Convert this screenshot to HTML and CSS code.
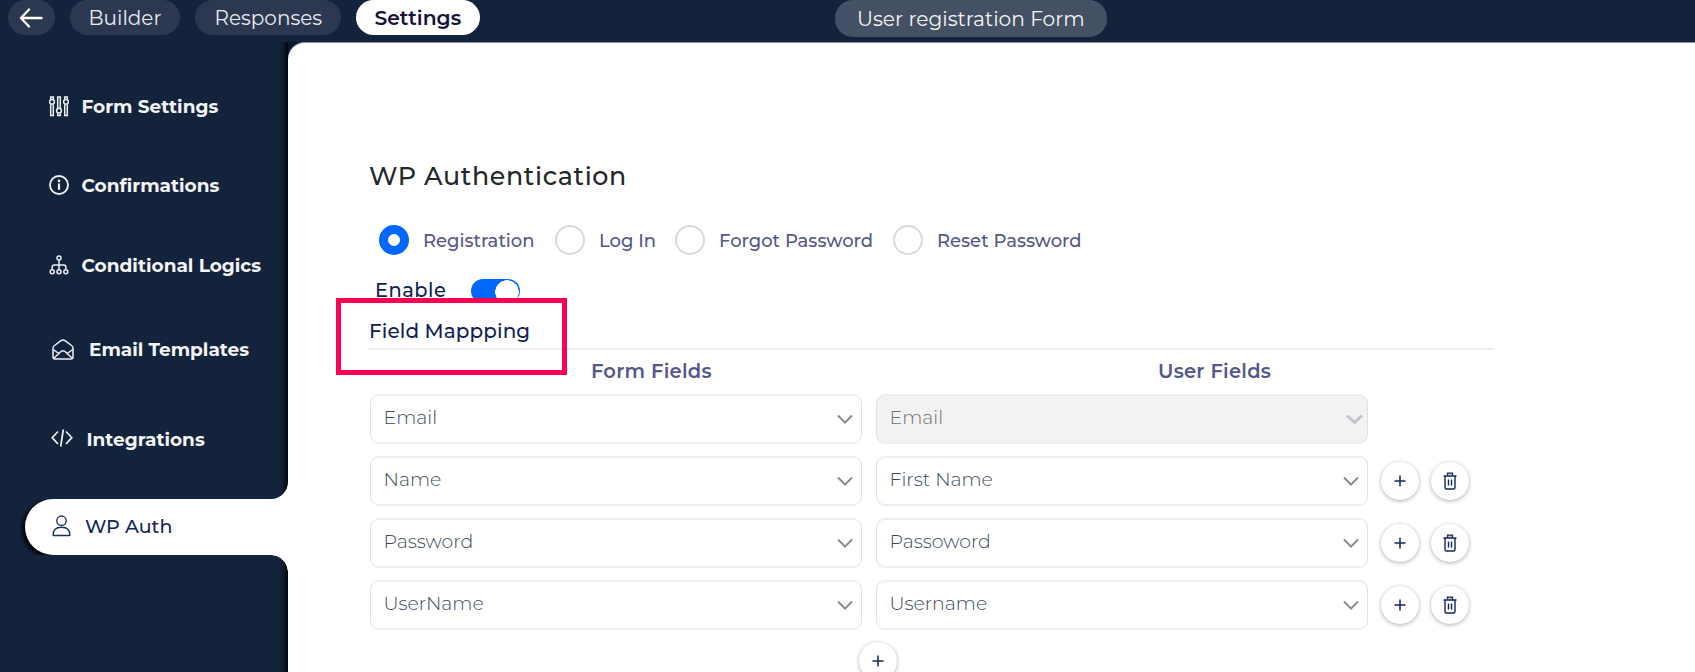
FILE: index.html
```html
<!DOCTYPE html>
<html lang="en">
<head>
<meta charset="utf-8">
<title>User registration Form</title>
<link rel="stylesheet" href="styles.css">
</head>
<body>
<svg class="defs" aria-hidden="true">
  <symbol id="chev" viewBox="0 0 16 11"><path d="M1 1.500 8 8.600l7-7.100" fill="none" stroke="currentColor" stroke-width="2"/></symbol>
  <symbol id="chev-off" viewBox="0 0 17 11"><path d="M1 1.500 8.500 8.600l7.500-7.100" fill="none" stroke="currentColor" stroke-width="2.800"/></symbol>
  <symbol id="plus" viewBox="0 0 12 12"><path d="M6 .5v11M.5 6h11" fill="none" stroke="currentColor" stroke-width="1.500"/></symbol>
  <symbol id="trash" viewBox="0 0 14 18"><path d="M4.500 3.500V1.200h5v2.300" fill="#c9cedb" stroke="currentColor" stroke-width="1.300"/><path d="M.5 4h13M2 4v11.500q0 1.500 1.500 1.500h7q1.500 0 1.500-1.500V4M5.500 7.500v6M8.500 7.500v6" fill="none" stroke="currentColor" stroke-width="1.400"/></symbol>
</svg>

<header class="topbar">
  <nav class="tabs">
    <a class="back"><svg width="24" height="20" viewBox="0 0 24 20"><path d="M10 1.500 2 10l8 8.500M2 10h20.500" fill="none" stroke="#fff" stroke-width="2.400" stroke-linecap="round" stroke-linejoin="round"/></svg></a>
    <a class="tab builder"><span class="t">Builder</span></a>
    <a class="tab responses"><span class="t">Responses</span></a>
    <a class="tab settings"><span class="t">Settings</span></a>
  </nav>
  <div class="title"><span class="t">User registration Form</span></div>
</header>

<div class="main">
  <aside class="sidebar">
    <div class="menu">
      <a class="item i1"><svg width="20" height="21" viewBox="0 0 20 21"><g fill="none" stroke="#eef0f6" stroke-width="1.500"><path d="M1.700 3V1h2.600v2M1.700 8.500V19.500h2.600V8.500M8.700 12V1h2.600v11M8.700 17.500v2h2.600v-2M15.700 3V1h2.600v2M15.700 8.500v11h2.600v-11"/><circle cx="3" cy="5.800" r="2.400"/><circle cx="10" cy="14.700" r="2.400"/><circle cx="17" cy="5.800" r="2.400"/></g></svg><span class="t">Form Settings</span></a>
      <a class="item i2"><svg width="20" height="20" viewBox="0 0 20 20"><circle cx="10" cy="10" r="9" fill="none" stroke="#eef0f6" stroke-width="1.900"/><path d="M10 8.500v6.300" stroke="#eef0f6" stroke-width="2.200"/><circle cx="10" cy="5.900" r="1.300" fill="#eef0f6"/></svg><span class="t">Confirmations</span></a>
      <a class="item i3"><svg width="20" height="20" viewBox="0 0 20 20"><g fill="none" stroke="#eef0f6" stroke-width="1.500"><circle cx="10" cy="3" r="2"/><circle cx="3.200" cy="16.700" r="2"/><circle cx="10" cy="16.700" r="2"/><circle cx="16.800" cy="16.700" r="2"/><path d="M10 5v9.500M3.200 14.500V12q0-2 2-2h9.600q2 0 2 2v2.500"/></g></svg><span class="t">Conditional Logics</span></a>
      <a class="item i4"><svg width="22" height="21" viewBox="0 0 22 21"><g fill="none" stroke="#eef0f6" stroke-width="1.500" stroke-linejoin="round"><path d="M1 9Q1 7.500 2.500 6.500L9 1.700q2-1.300 4 0l6.500 4.800Q21 7.500 21 9v9q0 2-2 2H3q-2 0-2-2z"/><path d="M1.200 10.500 7.500 15M20.800 10.500 14.500 15M2 19l7-6.500q2-1.500 4 0l7 6.500"/></g></svg><span class="t">Email Templates</span></a>
      <a class="item i5"><svg width="22" height="18" viewBox="0 0 22 18"><path d="M7 2.500 1.200 8.700 7 15M15 2.500l5.800 6.200L15 15M12.300.5 9.700 17.500" fill="none" stroke="#eef0f6" stroke-width="1.700"/></svg><span class="t">Integrations</span></a>
    </div>
    <div class="active-row">
      <a class="pill"><svg width="19" height="22" viewBox="0 0 19 22"><g fill="none" stroke="#1c2f66" stroke-width="1.400"><circle cx="9.500" cy="5.700" r="4.700"/><path d="M1.200 20.500q-.4-8.300 8.300-8.300t8.300 8.300z" stroke-linejoin="round"/></g></svg><span class="t">WP Auth</span></a>
    </div>
    <div class="rest"></div>
  </aside>

  <main class="content">
    <h1><span class="t">WP Authentication</span></h1>
    <div class="radios">
      <label class="radio r1"><i class="dot on"></i><span class="t">Registration</span></label>
      <label class="radio r2"><i class="dot"></i><span class="t">Log In</span></label>
      <label class="radio r3"><i class="dot"></i><span class="t">Forgot Password</span></label>
      <label class="radio r4"><i class="dot"></i><span class="t">Reset Password</span></label>
    </div>
    <div class="enable"><span class="t">Enable</span><i class="switch"></i></div>
    <h2><span class="t">Field Mappping</span><i class="highlight"></i></h2>
    <div class="heads"><span class="t h-form">Form Fields</span><span class="t h-user">User Fields</span></div>
    <div class="row">
      <div class="select"><span class="t">Email</span><svg class="chev"><use href="#chev"/></svg></div>
      <div class="select off"><span class="t">Email</span><svg class="chev"><use href="#chev-off"/></svg></div>
    </div>
    <div class="row">
      <div class="select"><span class="t">Name</span><svg class="chev"><use href="#chev"/></svg></div>
      <div class="select"><span class="t">First Name</span><svg class="chev"><use href="#chev"/></svg></div>
      <button class="round"><svg class="plus"><use href="#plus"/></svg></button>
      <button class="round"><svg class="trash"><use href="#trash"/></svg></button>
    </div>
    <div class="row">
      <div class="select"><span class="t">Password</span><svg class="chev"><use href="#chev"/></svg></div>
      <div class="select"><span class="t">Passoword</span><svg class="chev"><use href="#chev"/></svg></div>
      <button class="round"><svg class="plus"><use href="#plus"/></svg></button>
      <button class="round"><svg class="trash"><use href="#trash"/></svg></button>
    </div>
    <div class="row">
      <div class="select"><span class="t">UserName</span><svg class="chev"><use href="#chev"/></svg></div>
      <div class="select"><span class="t">Username</span><svg class="chev"><use href="#chev"/></svg></div>
      <button class="round"><svg class="plus"><use href="#plus"/></svg></button>
      <button class="round"><svg class="trash"><use href="#trash"/></svg></button>
    </div>
    <div class="more"><button class="round"><svg class="plus"><use href="#plus"/></svg></button></div>
  </main>
</div>
</body>
</html>
```
FILE: styles.css
```css
* { box-sizing: border-box; }
body {
  margin: 0;
  width: 1695px;
  height: 672px;
  overflow: hidden;
  background: #14233c;
  font-family: Montserrat, Inter, "Open Sans", sans-serif;
  display: flex;
  flex-direction: column;
}
.defs { position: absolute; width: 0; height: 0; }
.t { white-space: nowrap; line-height: 24px; }

.topbar { height: 42px; display: flex; align-items: flex-start; flex: none; }
.tabs { display: flex; width: 835px; }
.back, .tab { height: 35px; border-radius: 18px; background: #2b3850; color: #e9ebf0; }
.back { width: 47px; margin-left: 8px; padding-right: 1px; display: flex; align-items: center; justify-content: center; }
.tab { margin-left: 15px; font-size: 20px; padding-top: 6px; }
.builder { width: 110px; padding-left: 18.500px; }
.responses { width: 146px; padding-left: 19.500px; }
.settings { width: 124px; padding-left: 18.500px; padding-top: 5px; background: #fff; color: #14123c; font-weight: 600; font-size: 20.300px; }
.title {
  width: 272px;
  height: 37px;
  padding: 6px 0 0 22px;
  border-radius: 18px;
  background: #445063;
  color: #f4f5f7;
  font-size: 20.200px;
}

.main { flex: 1; display: flex; min-height: 0; background: #0b1930; }
.sidebar { width: 288px; flex: none; display: flex; flex-direction: column; background: #fff; }
.menu, .rest { background: linear-gradient(90deg, #14233c calc(100% - 9px), #0f1b2e calc(100% - 5px), #01050b 100%); }
.menu { height: 457px; border-bottom-right-radius: 17px; padding-top: 50px; color: #f3f4f8; font-weight: 700; font-size: 18.500px; }
.item { display: flex; align-items: center; height: 28px; }
.item svg, .pill svg { flex: none; }
.item .t { padding-top: 1px; }
.i1 { padding-left: 49px; gap: 12.500px; }
.i2 { padding-left: 49px; gap: 12.500px; margin-top: 51px; }
.i3 { padding-left: 49px; gap: 12.500px; margin-top: 52px; }
.i4 { padding-left: 52px; gap: 15px; margin-top: 56px; }
.i5 { padding-left: 51px; gap: 13.500px; margin-top: 62px; }
.i5 svg { margin-top: -2px; }
.active-row { height: 56px; padding-left: 25px; background: #14233c; }
.pill {
  height: 56px;
  position: relative;
  display: flex;
  align-items: center;
  gap: 14px;
  padding: 0 0 0 27px;
  border-radius: 28px 0 0 28px;
  background: #fff;
  box-shadow: -3px 2px 4px #000;
  clip-path: inset(0 0 -12px -12px);
  color: #14265c;
  font-size: 19px;
  font-weight: 500;
}
.pill svg { margin-top: -3px; }
.rest { flex: 1; position: relative; border-top-right-radius: 17px; }
/* hides the pill shadow inside the concave corner */
.rest::after {
  content: "";
  position: absolute;
  top: 0;
  right: 0;
  width: 17px;
  height: 17px;
  background: radial-gradient(circle at 0 100%, transparent 16.500px, #fff 17px);
}

.content {
  flex: 1;
  background: #fff;
  border-top-left-radius: 17px;
  border-top: 1px solid #8d93a3;
  padding: 118px 0 0 81px;
}
h1, h2 { margin: 0; font-weight: 500; }
h1 { height: 30px; font-size: 25.300px; letter-spacing: .65px; color: #23282d; line-height: 30px; }
.radios { display: flex; align-items: center; height: 30px; margin-top: 33px; padding-left: 10px; padding-top: 2px; color: #55588a; font-size: 18px; font-weight: 500; }
.radio { display: flex; align-items: center; gap: 14px; }
.radio .t { padding-top: 1px; }
.r1 { width: 176px; }
.r2 { width: 120px; }
.r3 { width: 218px; }
.dot { width: 30px; height: 30px; border-radius: 50%; border: 2px solid #d9d9d9; }
.dot.on { border: 9px solid #0068ff; }
.enable { display: flex; height: 24px; margin-top: 25px; padding-left: 6px; color: #0f1f55; font-size: 19.400px; letter-spacing: .5px; font-weight: 500; }
.enable .t { width: 96px; margin-top: -1px; }
.switch { width: 49px; height: 24px; border-radius: 12px; background: radial-gradient(circle 12px at 36px 13px, #fff 11.500px, #0068ff 12px); }
h2 { position: relative; width: 1125px; height: 47px; padding-top: 16px; border-bottom: 2px solid #eee; color: #0f1f55; font-size: 20px; letter-spacing: .08px; line-height: 24px; }
.highlight { position: absolute; left: -33px; top: -5px; width: 231px; height: 77px; border: 5px solid #fc0352; }
.heads { display: flex; height: 44px; padding: 9px 0 0 222px; color: #55588a; font-size: 19.500px; letter-spacing: .25px; font-weight: 600; }
.h-form { width: 567px; }
.row { display: flex; align-items: center; height: 50px; margin-bottom: 12px; margin-left: 1px; }
.select {
  width: 492px;
  height: 50px;
  margin-right: 14px;
  display: flex;
  justify-content: space-between;
  padding: 10px 8px 0 12.500px;
  border: 2px solid #eee;
  border-left: 1px solid #e2e2e2;
  border-right: 1px solid #e2e2e2;
  border-radius: 9px;
  color: #3a4862;
  font-size: 18.900px;
  font-weight: 300;
}
.row .select:nth-child(2) { margin-right: 13px; }
.select.off { background: #f2f2f2; color: #6f6f6f; padding-right: 4px; }
.chev { width: 16px; height: 11px; margin-top: 8px; color: #8a8a8a; }
.off .chev { color: #c2c5ca; width: 17px; }
.round { width: 38px; height: 38px; margin-right: 12px; border: 0; padding: 0; border-radius: 50%; background: #fff; color: #14265c; box-shadow: 0 1px 4px rgba(0,0,0,.32); display: grid; place-items: center; }
.plus { width: 12px; height: 12px; }
.trash { width: 14px; height: 18px; }
.more { padding: 0 0 0 490px; }
```
